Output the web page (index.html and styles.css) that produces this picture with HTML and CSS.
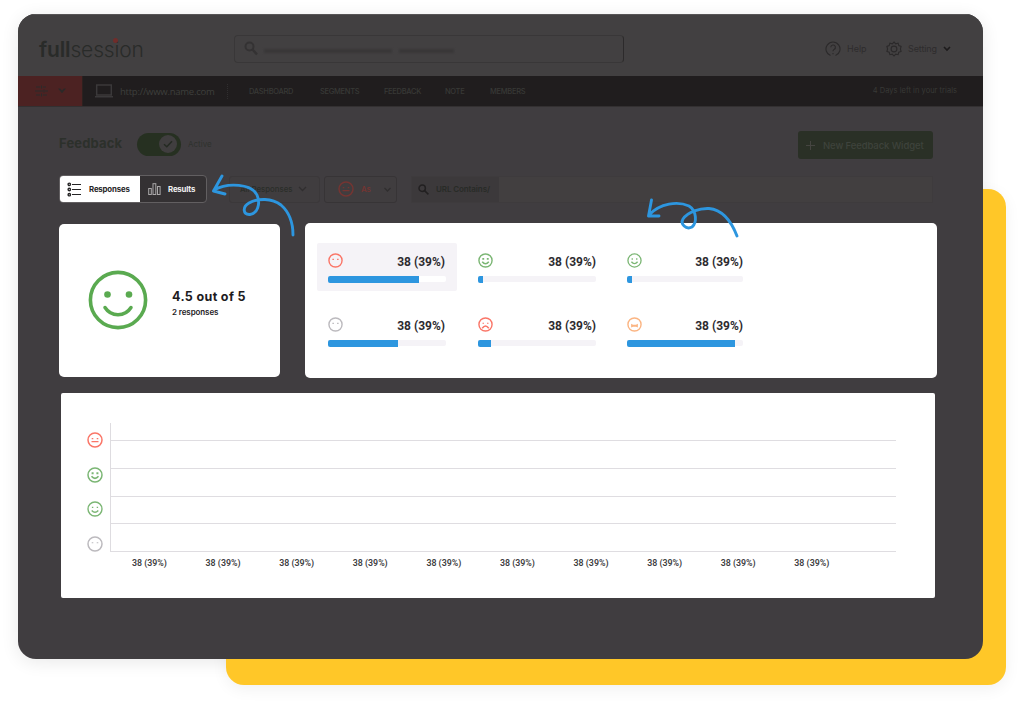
FILE: index.html
```
<!DOCTYPE html>
<html lang="en">
<head>
<meta charset="utf-8">
<title>FullSession Feedback</title>
<link rel="stylesheet" href="styles.css">
</head>
<body>
<svg class="defs" width="0" height="0">
  <symbol id="blank" viewBox="0 0 16 16"><g fill="none" stroke="currentColor"><circle cx="8" cy="8" r="7" stroke-width="1.5"/><path d="M4.7 6.8h1.6M9.7 6.8h1.6" stroke-width="1.1"/></g></symbol>
  <symbol id="flat" viewBox="0 0 16 16"><g fill="none" stroke="currentColor"><circle cx="8" cy="8" r="7" stroke-width="1.5"/><path d="M4.7 6.6h1.6M9.7 6.6h1.6M4.5 9.6h7" stroke-width="1.2"/></g></symbol>
  <symbol id="smile" viewBox="0 0 16 16"><g fill="none" stroke="currentColor"><circle cx="8" cy="8" r="7" stroke-width="1.4"/><path d="M4.9 6.4h1.4M9.7 6.4h1.4" stroke-width="1.4"/><path d="M4.7 9.4q3.3 3.8 6.6 0" stroke-width="1.5"/></g></symbol>
  <symbol id="happy" viewBox="0 0 16 16"><g fill="none" stroke="currentColor"><circle cx="8" cy="8" r="7" stroke-width="1.5"/><path d="M4.6 6.3h2M9.4 6.3h2" stroke-width="2"/><path d="M4.5 9.3q3.5 4.2 7 0" stroke-width="1.6"/></g></symbol>
  <symbol id="sad" viewBox="0 0 16 16"><g fill="none" stroke="currentColor"><circle cx="8" cy="8" r="7" stroke-width="1.5"/><path d="M4.8 6.7h1.6M9.6 6.7h1.6" stroke-width="1.1"/><path d="M4.500 12q3.500-4.800 7 0" stroke-width="1.600"/></g></symbol>
  <symbol id="grin" viewBox="0 0 16 16"><circle cx="8" cy="8" r="7" stroke-width="1.5" fill="none" stroke="currentColor"/><path d="M4.400 7.200l2 1h3.200l2-1v4l-2-.7H6.400l-2 .7z" fill="currentColor"/></symbol>
</svg>
<div class="stage">
  <div class="backdrop"></div>
  <div class="window">
    <header class="header">
      <div class="logo"><b>full</b>session<i class="logo-dot"></i></div>
      <div class="search">
        <svg width="15" height="15" viewBox="0 0 15 15" fill="none" stroke="#343233" stroke-width="2"><circle cx="5.500" cy="5.500" r="4"/><path d="M8.500 8.500l4.500 5" stroke-width="2.400"/></svg>
        <span class="search-blur"></span><span class="search-blur short"></span>
      </div>
      <div class="help">
        <svg width="16" height="16" viewBox="0 0 16 16" fill="none" stroke="#2b292a" stroke-width="1.1"><path d="M5.500 14.600A7 7 0 1 1 10.500 14.600"/><path d="M5.800 6.300a2.300 2.300 0 1 1 3.200 2.100q-1 .5-1 1.800M8 12v1.300"/></svg>
        <span>Help</span>
      </div>
      <div class="setting">
        <svg width="16" height="16" viewBox="0 0 16 16" fill="none" stroke="#2b292a" stroke-width="1.1"><path d="M8 1l1.700 1.800 2.400-.6.7 2.400 2.300.8L14.400 8l.7 2.500-2.300.8-.7 2.400-2.400-.6L8 15l-1.700-1.900-2.400.6-.7-2.400L.9 10.500 1.600 8 .9 5.400l2.300-.8.7-2.400 2.400.6z"/><circle cx="8" cy="8" r="2.900"/></svg>
        <span>Setting</span>
        <svg width="8" height="6" viewBox="0 0 8 6" fill="none" stroke="#1d1b1c" stroke-width="1.600"><path d="M1 1l3 3 3-3"/></svg>
      </div>
    </header>
    <nav class="nav">
      <div class="nav-menu">
        <svg width="13" height="12" viewBox="0 0 13 12" fill="none" stroke="#2b2b2a" stroke-width="1.1"><path d="M1 2h4M8 2h3M0 6h8M10 6h3M1 10h4M8 10h4M6.500 .5v3M9 4.500v3M6.500 8.500v3"/></svg>
        <svg width="8" height="6" viewBox="0 0 8 6" fill="#2b2928"><path d="M0 .5h2L4 2.500 6 .5h2L4 5.200z"/></svg>
      </div>
      <div class="nav-url">
        <svg width="18" height="14" viewBox="0 0 18 14" fill="none" stroke="#3b393a" stroke-width="1.500"><rect x="1.700" y="1" width="14.600" height="10"/><path d="M0 12.800h18"/></svg>
        <span>http://www.name.com</span>
      </div>
      <ul class="nav-links">
        <li class="n1">DASHBOARD</li><li class="n2">SEGMENTS</li><li class="n3">FEEDBACK</li><li class="n4">NOTE</li><li class="n5">MEMBERS</li>
      </ul>
      <span class="trial">4 Days left in your trials</span>
    </nav>
    <main class="content">
      <div class="title-row">
        <h1>Feedback</h1>
        <span class="toggle"><svg width="18" height="18" viewBox="0 0 18 18"><circle cx="9" cy="9" r="9" fill="#403e3f"/><path d="M5 9.300l2.800 2.500L13 6.300" fill="none" stroke="#242a22" stroke-width="1.500"/></svg></span>
        <span class="active">Active</span>
        <button class="new"><svg width="9" height="9" viewBox="0 0 9 9" stroke="#454541"><path d="M0 4.500h9M4.500 0v9"/></svg><span>New Feedback Widget</span></button>
      </div>
      <div class="filter-row">
        <div class="tabs">
          <div class="tab on"><svg width="15" height="15" viewBox="0 0 15 15" fill="none" stroke="#252425" stroke-width="1.400"><path d="M5 2.500h9M5 7.500h9M5 12.500h9" stroke-width="1"/><circle cx="2.300" cy="2.300" r="1.200"/><circle cx="2.300" cy="7.500" r="1.200"/><circle cx="2.300" cy="12.700" r="1.200"/></svg><span>Responses</span></div>
          <div class="tab"><svg width="13" height="12" viewBox="0 0 13 12" fill="none" stroke="#aaa8a9"><rect x=".7" y="5.500" width="2.600" height="6"/><rect x="5" y=".7" width="2.800" height="10.800"/><rect x="9.500" y="3.500" width="2.600" height="8"/></svg><span>Results</span></div>
        </div>
        <div class="select"><span>All Responses</span><svg width="9" height="6" viewBox="0 0 9 6" fill="none" stroke="#302e2f" stroke-width="1.300"><path d="M1 1l3.500 3.500L8 1"/></svg></div>
        <div class="mood"><svg class="face-as" width="16" height="16"><use href="#flat"/></svg><span>As</span><svg width="7" height="5" viewBox="0 0 7 5" fill="none" stroke="#302e2f" stroke-width="1.300"><path d="M.5 1l3 3 3-3"/></svg></div>
        <div class="url"><div class="url-label"><svg width="11" height="11" viewBox="0 0 11 11" fill="none" stroke="#222021" stroke-width="1.500"><circle cx="4.200" cy="4.200" r="3.200"/><path d="M6.600 6.600l3.800 3.800"/></svg><span>URL Contains/</span></div></div>
      </div>
      <div class="cards">
        <section class="card score">
          <svg width="60" height="60" viewBox="0 0 60 60" fill="none" stroke="#5aaa50"><circle cx="30" cy="30" r="27.600" stroke-width="3.600"/><path d="M17 37.500c6 9.500 20 9.500 26 0" stroke-width="3.500" stroke-linecap="round"/><g fill="#5aaa50" stroke="none"><circle cx="19.500" cy="24.500" r="3.300"/><circle cx="41" cy="24.500" r="3.300"/></g></svg>
          <div class="score-text"><strong>4.5 out of 5</strong><span>2 responses</span></div>
        </section>
        <section class="card moods">
          <div class="stat sel"><div class="line"><svg class="red"><use href="#blank"/></svg><b>38 (39%)</b></div><div class="bar"><i style="width:91px"></i></div></div>
          <div class="stat"><div class="line"><svg class="green"><use href="#happy"/></svg><b>38 (39%)</b></div><div class="bar"><i style="width:5px"></i></div></div>
          <div class="stat"><div class="line"><svg class="green"><use href="#smile"/></svg><b>38 (39%)</b></div><div class="bar"><i style="width:5px"></i></div></div>
          <div class="stat"><div class="line"><svg class="grey"><use href="#blank"/></svg><b>38 (39%)</b></div><div class="bar"><i style="width:70px"></i></div></div>
          <div class="stat"><div class="line"><svg class="red"><use href="#sad"/></svg><b>38 (39%)</b></div><div class="bar"><i style="width:13px"></i></div></div>
          <div class="stat"><div class="line"><svg class="orange"><use href="#grin"/></svg><b>38 (39%)</b></div><div class="bar"><i style="width:108px"></i></div></div>
        </section>
      </div>
      <section class="chart">
        <div class="axis"><svg class="red"><use href="#flat"/></svg><svg class="green"><use href="#happy"/></svg><svg class="green"><use href="#smile"/></svg><svg class="grey"><use href="#blank"/></svg></div>
        <div class="plot">
          <div class="grid"><i></i><i></i><i></i><i></i><i></i></div>
          <div class="labels"><span>38 (39%)</span><span>38 (39%)</span><span>38 (39%)</span><span>38 (39%)</span><span>38 (39%)</span><span>38 (39%)</span><span>38 (39%)</span><span>38 (39%)</span><span>38 (39%)</span><span>38 (39%)</span></div>
        </div>
      </section>
    </main>
  </div>
  <svg class="arrows" width="1024" height="707" fill="none" stroke="#2d96df" stroke-width="2.900" stroke-linecap="round" stroke-linejoin="round">
    <path d="M222 176L213.500 191L225 194M214 190C228 182 252 184 257 195C261 204 257 214 250 214.500C243 215 242 207 249 203C258 198 272 198 281 205C289 212 293 222 293 235"/>
    <path d="M651.500 200L648.500 216L659 216M649 215C660 203 678 201 689 206C697 211 697 223 692 227C686 230 680 224 683 219C688 212 700 208 709 208.500C724 210 732 223 737 236"/>
  </svg>
</div>
</body>
</html>
```
FILE: styles.css
```
* { box-sizing: border-box; }
body { margin: 0; background: #fff; font-family: Inter, "Liberation Sans", sans-serif; }
h1, ul { margin: 0; padding: 0; list-style: none; }
svg { display: block; flex: none; }
span, b, strong { white-space: nowrap; }
.defs { position: absolute; }
.stage { position: relative; width: 1024px; height: 707px; padding: 14px 41px 48px 18px; overflow: hidden; }
.stage::before { content: ""; position: absolute; left: 18px; top: 14px; width: 965px; height: 645px; border-radius: 18px; box-shadow: 0 3px 18px rgba(0,0,0,.09); }
.backdrop { position: absolute; left: 226px; top: 189px; width: 780px; height: 496px; border-radius: 18px; background: #ffc728; box-shadow: 0 4px 16px rgba(0,0,0,.06); }
.arrows { position: absolute; left: 0; top: 0; }
.window { position: relative; width: 965px; height: 645px; border-radius: 18px; overflow: hidden; background: #403d40; }

.header { display: flex; align-items: center; height: 62px; padding: 6px 31px 0 21px; background: #424041; border-top: 1px solid #575556; color: #2e2c2d; }
.logo { position: relative; width: 195px; font-size: 21px; letter-spacing: -.15px; line-height: 24px; padding-top: 3px; color: #292b29; font-weight: 300; }
.logo b { font-weight: 600; }
.logo-dot { position: absolute; left: 74px; top: 3px; width: 5px; height: 5px; border-radius: 50%; background: #702d2b; }
.search { display: flex; align-items: center; width: 390px; height: 28px; padding-left: 9px; border: 1px solid #393738; border-right-color: #2c2a2b; border-radius: 4px; }
.search-blur { width: 128px; height: 4px; margin: 4px 0 0 5px; background: #393738; filter: blur(1px); }
.search-blur.short { width: 55px; margin-left: 7px; }
.help, .setting { display: flex; align-items: center; font-size: 9px; }
.help { width: 61px; margin-left: 201px; gap: 6px; }
.setting { gap: 6px; letter-spacing: -.1px; }

.nav { display: flex; align-items: center; height: 31px; background: #201d1e; border-bottom: 1px solid #333031; color: #383936; }
.nav-menu { display: flex; align-items: center; justify-content: center; gap: 10px; width: 65px; height: 30px; background: #4c2222; border-right: 1px solid #2c211f; }
.nav-url { display: flex; align-items: center; gap: 7px; width: 145px; height: 15px; padding-left: 12px; border-right: 1px dotted #302e2f; font: 9.500px "Open Sans", sans-serif; letter-spacing: -.25px; color: #3e3f3c; }
.nav-links { display: flex; flex: 1; padding-top: 1px; font-size: 7.500px; font-weight: 500; letter-spacing: -.3px; }
.n1 { width: 71px; margin-left: 21px; }
.n2 { width: 64px; }
.n3 { width: 61px; }
.n4 { width: 45px; }
.trial { padding: 0 26px 1px 0; font-size: 7.500px; letter-spacing: .03px; }

.content { padding: 24px 46px 0 41px; }
.title-row { display: flex; align-items: center; height: 28px; }
h1 { width: 78px; padding-bottom: 5px; font-size: 13px; letter-spacing: .15px; line-height: 16px; color: #2c302b; }
.toggle { display: flex; align-items: center; justify-content: flex-end; width: 44px; height: 23px; margin-top: -2px; padding-right: 4px; border-radius: 12px; background: #263021; }
.active { padding-left: 7px; margin-top: -2px; font-size: 8px; color: #2f322e; }
.new { display: flex; align-items: center; gap: 8px; width: 135px; height: 28px; margin-left: auto; margin-right: 4px; padding: 0 0 0 8px; border: 0; border-radius: 3px; background: #2a3026; color: #3e433c; font: 500 9.500px Inter, sans-serif; letter-spacing: -.1px; }

.filter-row { display: flex; align-items: center; height: 28px; margin-top: 16px; }
.tabs { display: flex; width: 148px; height: 28px; border: 1px solid #625f61; border-radius: 4px; overflow: hidden; background: #343133; }
.tab { display: flex; align-items: center; gap: 7px; padding-left: 8px; font-size: 7.800px; font-weight: 700; letter-spacing: -.15px; color: #f2f2f2; }
.tab.on { width: 80px; padding-left: 7px; background: #fff; color: #252425; }
.select, .mood { display: flex; align-items: center; height: 27px; border: 1px solid #3b383a; border-radius: 3px; background: #403d3f; font-size: 7.800px; }
.select { width: 91px; margin-left: 22px; padding-left: 10px; gap: 6px; color: #2a2d29; font-weight: 500; }
.mood { width: 73px; margin-left: 4px; padding-left: 13px; gap: 7px; color: #743532; border-color: #373436; font-weight: 600; }
.mood span { width: 16px; }
.face-as { color: #743532; }
.url { flex: 1; height: 27px; margin: 0 4px 0 14px; background: #423f40; border: 1px solid #3e3b3d; }
.url-label { display: flex; align-items: center; gap: 7px; width: 87px; height: 25px; padding-left: 6px; background: #3c393b; color: #282b27; font-size: 8px; font-weight: 600; letter-spacing: -.1px; }

.cards { display: flex; gap: 25px; align-items: flex-start; margin-top: 20px; }
.card { background: #fff; border-radius: 5px; }
.score { display: flex; align-items: center; width: 221px; height: 153px; margin-top: 1px; padding: 0 0 2px 29px; gap: 24px; }
.score-text { display: flex; flex-direction: column; gap: 3px; padding-top: 7px; color: #1d1b1e; }
.score-text strong { font-size: 12.500px; line-height: 14px; letter-spacing: .35px; }
.score-text span { font-size: 8px; line-height: 10px; font-weight: 600; letter-spacing: -.1px; }
.moods { display: grid; grid-template-columns: 140px 140px 140px; grid-template-rows: 48px 48px; column-gap: 9px; row-gap: 16px; width: 632px; height: 155px; padding: 20px 0 0 12px; }
.stat { padding: 8px 11px 0 11px; }
.stat:nth-child(3n + 2) { padding: 8px 10px 0 12px; }
.stat:nth-child(3n) { padding: 8px 12px 0 12px; }
.stat.sel { background: #f5f3f7; border-radius: 2px; }
.line { display: flex; align-items: center; justify-content: space-between; height: 20px; }
.line svg { width: 15px; height: 15px; margin-top: -2px; }
.line b { padding-top: 1px; font: 700 12px Roboto, sans-serif; color: #2d2b2f; }
.stat:nth-child(3n + 1) b { margin-right: 1px; }
.bar { height: 6px; margin-top: 5px; border-radius: 2px; background: #f5f3f7; }
.sel .bar { background: #fff; }
.bar i { display: block; height: 7px; background: #2d96df; border-radius: 2px 0 0 2px; }
.red { color: #fa7668; }
.green { color: #7bb674; }
.grey { color: #bcbabe; }
.orange { color: #fbb583; }

.chart { display: flex; width: 874px; height: 205px; margin: 15px 0 0 2px; padding: 30px 39px 0 26px; background: #fff; border-radius: 2px; }
.axis { display: flex; flex-direction: column; gap: 18.500px; width: 23px; padding-top: 9px; }
.axis svg { width: 16px; height: 16px; }
.plot { flex: 1; }
.grid { display: flex; flex-direction: column; gap: 26.750px; height: 129px; padding-top: 17px; border-left: 1px solid #dedce0; }
.grid i { height: 1px; flex: none; background: #dfdde1; }
.labels { display: flex; gap: 38.600px; padding: 5px 0 0 22px; font: 600 8.800px/12px Roboto, sans-serif; color: #403e42; }
.labels span { width: 35px; }
```
